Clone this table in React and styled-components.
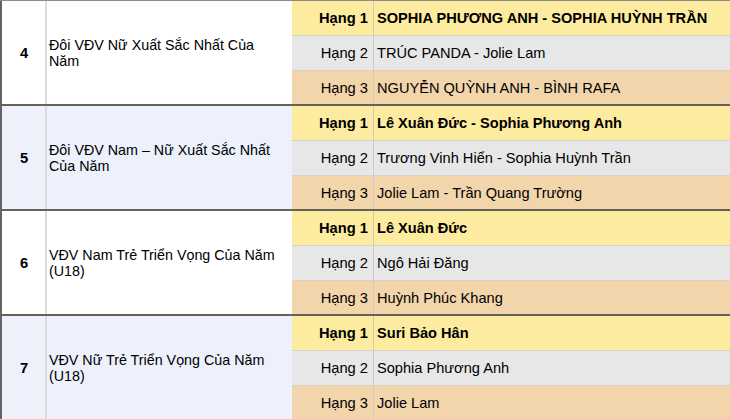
import React from 'react';
import styled, { createGlobalStyle } from 'styled-components';

const GlobalStyle = createGlobalStyle`
  html, body {
    margin: 0;
    padding: 0;
    background: #ffffff;
  }
  body {
    font-family: "Liberation Sans", Arial, sans-serif;
    color: #000;
  }
`;

const tierColors = {
  1: '#fdec9f',
  2: '#e7e7e7',
  3: '#f2d5aa',
};

const Sheet = styled.div`
  width: 730px;
  height: 419px;
  overflow: hidden;
  border-top: 1px solid #8d8d8d;
  box-sizing: border-box;
`;

const Group = styled.div`
  display: grid;
  grid-template-columns: 45px 245px 82px 1fr;
  grid-template-rows: 35px 35px 33px;
  border-left: 2px solid #646464;
  border-bottom: 2px solid #676259;
  background: ${(p) => (p.$tint ? '#ecf1fc' : '#ffffff')};
`;

const NumCell = styled.div`
  grid-row: 1 / span 3;
  display: flex;
  align-items: center;
  justify-content: center;
  padding-left: 1px;
  border-right: 2px solid #dcdcdc;
  font-size: 14.7px;
  font-weight: 700;
`;

const CategoryCell = styled.div`
  grid-row: 1 / span 3;
  display: flex;
  align-items: center;
  padding: 1px 8px 0 2px;
  font-size: 14.3px;
  line-height: 16px;
`;

const RankCell = styled.div`
  display: flex;
  align-items: center;
  justify-content: flex-end;
  padding-right: 5px;
  background: ${(p) => tierColors[p.$tier]};
  border-right: 1px solid #cfc9bd;
  border-bottom: ${(p) => (p.$tier < 3 ? '1px solid #d6d2c8' : 'none')};
  font-size: 14.7px;
  font-weight: ${(p) => (p.$tier === 1 ? 700 : 400)};
  white-space: nowrap;
`;

const NameCell = styled.div`
  display: flex;
  align-items: center;
  padding-left: 3px;
  background: ${(p) => tierColors[p.$tier]};
  border-bottom: ${(p) => (p.$tier < 3 ? '1px solid #d6d2c8' : 'none')};
  font-size: 14.6px;
  font-weight: ${(p) => (p.$tier === 1 ? 700 : 400)};
  white-space: nowrap;
`;

const awards = [
  {
    no: 4,
    title: 'Đôi VĐV Nữ Xuất Sắc Nhất Của Năm',
    tint: false,
    names: [
      'SOPHIA PHƯƠNG ANH - SOPHIA HUỲNH TRẦN',
      'TRÚC PANDA - Jolie Lam',
      'NGUYỄN QUỲNH ANH - BÌNH RAFA',
    ],
  },
  {
    no: 5,
    title: 'Đôi VĐV Nam – Nữ Xuất Sắc Nhất Của Năm',
    tint: true,
    names: [
      'Lê Xuân Đức - Sophia Phương Anh',
      'Trương Vinh Hiển - Sophia Huỳnh Trần',
      'Jolie Lam - Trần Quang Trường',
    ],
  },
  {
    no: 6,
    title: 'VĐV Nam Trẻ Triển Vọng Của Năm (U18)',
    tint: false,
    names: ['Lê Xuân Đức', 'Ngô Hải Đăng', 'Huỳnh Phúc Khang'],
  },
  {
    no: 7,
    title: 'VĐV Nữ Trẻ Triển Vọng Của Năm (U18)',
    tint: true,
    names: ['Suri Bảo Hân', 'Sophia Phương Anh', 'Jolie Lam'],
  },
];

function AwardGroup({ award }) {
  return (
    <Group $tint={award.tint}>
      <NumCell>{award.no}</NumCell>
      <CategoryCell>{award.title}</CategoryCell>
      {award.names.map((name, i) => (
        <React.Fragment key={i}>
          <RankCell $tier={i + 1} style={{ gridColumn: 3, gridRow: i + 1 }}>
            Hạng {i + 1}
          </RankCell>
          <NameCell $tier={i + 1} style={{ gridColumn: 4, gridRow: i + 1 }}>
            {name}
          </NameCell>
        </React.Fragment>
      ))}
    </Group>
  );
}

export default function App() {
  return (
    <>
      <GlobalStyle />
      <Sheet>
        {awards.map((a) => (
          <AwardGroup key={a.no} award={a} />
        ))}
      </Sheet>
    </>
  );
}
